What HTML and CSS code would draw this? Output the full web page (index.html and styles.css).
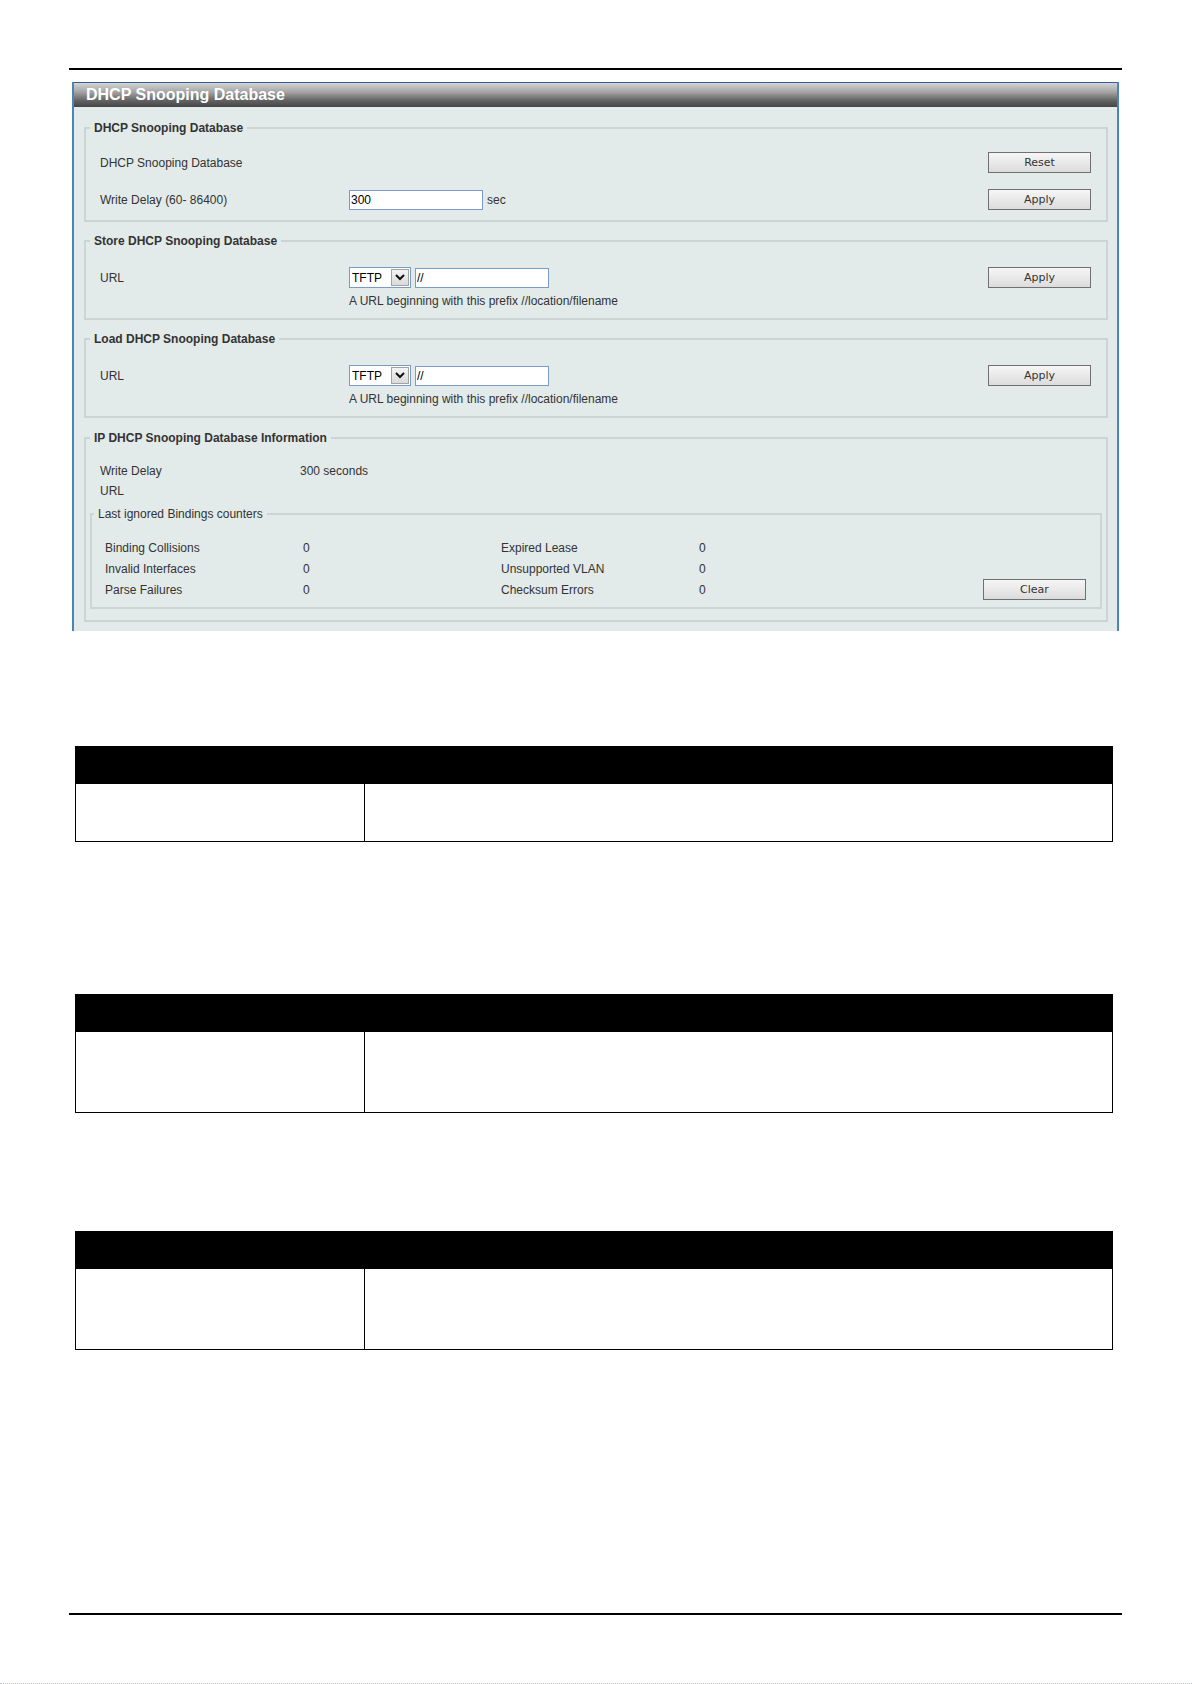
FILE: index.html
```html
<!DOCTYPE html>
<html lang="en">
<head>
    <meta charset="UTF-8">
    <title>DHCP Snooping Database</title>
    <link rel="stylesheet" href="styles.css">
</head>
<body>
    <div class="page">
        <hr class="rule">

        <div class="panel">
            <div class="panel-title">DHCP Snooping Database</div>
            <div class="panel-body">

                <fieldset class="group group-first">
                    <legend>DHCP Snooping Database</legend>
                    <div class="form-row">
                        <span>DHCP Snooping Database</span>
                        <span></span>
                        <button class="btn">Reset</button>
                    </div>
                    <div class="form-row">
                        <span>Write Delay (60- 86400)</span>
                        <span class="control"><input class="text-input" type="text" value="300"> sec</span>
                        <button class="btn">Apply</button>
                    </div>
                </fieldset>

                <fieldset class="group group-url">
                    <legend>Store DHCP Snooping Database</legend>
                    <div class="form-row">
                        <span>URL</span>
                        <span class="control">
                            <span class="proto-select">
                                <select class="proto"><option>TFTP</option></select>
                                <span class="proto-arrow">
                                    <svg width="10" height="7" viewBox="0 0 10 7"><polyline points="1,1 5,5 9,1" fill="none" stroke="#111" stroke-width="2"/></svg>
                                </span>
                            </span>
                            <input class="text-input url-input" type="text" value="//">
                        </span>
                        <button class="btn">Apply</button>
                    </div>
                    <div class="hint">A URL beginning with this prefix //location/filename</div>
                </fieldset>

                <fieldset class="group group-url">
                    <legend>Load DHCP Snooping Database</legend>
                    <div class="form-row">
                        <span>URL</span>
                        <span class="control">
                            <span class="proto-select">
                                <select class="proto"><option>TFTP</option></select>
                                <span class="proto-arrow">
                                    <svg width="10" height="7" viewBox="0 0 10 7"><polyline points="1,1 5,5 9,1" fill="none" stroke="#111" stroke-width="2"/></svg>
                                </span>
                            </span>
                            <input class="text-input url-input" type="text" value="//">
                        </span>
                        <button class="btn">Apply</button>
                    </div>
                    <div class="hint">A URL beginning with this prefix //location/filename</div>
                </fieldset>

                <fieldset class="group group-info">
                    <legend>IP DHCP Snooping Database Information</legend>
                    <div class="info-row"><span>Write Delay</span><span>300 seconds</span></div>
                    <div class="info-row"><span>URL</span><span></span></div>

                    <fieldset class="counters">
                        <legend>Last ignored Bindings counters</legend>
                        <div class="counter-row">
                            <span>Binding Collisions</span><span>0</span>
                            <span>Expired Lease</span><span>0</span>
                            <span></span><span></span>
                        </div>
                        <div class="counter-row">
                            <span>Invalid Interfaces</span><span>0</span>
                            <span>Unsupported VLAN</span><span>0</span>
                            <span></span><span></span>
                        </div>
                        <div class="counter-row">
                            <span>Parse Failures</span><span>0</span>
                            <span>Checksum Errors</span><span>0</span>
                            <span></span><button class="btn">Clear</button>
                        </div>
                    </fieldset>
                </fieldset>

            </div>
        </div>

        <table class="param-table table-first">
            <tr><th></th><th></th></tr>
            <tr><td class="cell-short"></td><td></td></tr>
        </table>

        <table class="param-table table-second">
            <tr><th></th><th></th></tr>
            <tr><td class="cell-tall"></td><td></td></tr>
        </table>

        <table class="param-table table-third">
            <tr><th></th><th></th></tr>
            <tr><td class="cell-tall"></td><td></td></tr>
        </table>

        <hr class="rule rule-bottom">
    </div>
    <div class="page-edge"></div>
</body>
</html>
```

FILE: styles.css
```css
body {
    margin: 0;
    background-color: #fff;
    font-family: "Liberation Sans", Arial, sans-serif;
    font-size: 12px;
    color: #333;
}
.page {
    width: 1053px;
    margin-left: 69px;
    padding-top: 68px;
}
.rule {
    height: 2px;
    margin: 0;
    border: 0;
    background-color: #000;
}

/* web UI panel */
.panel {
    width: 1047px;
    margin: 12px 0 0 3px;
    box-sizing: border-box;
    border-left: 2px solid #4a84bd;
    border-right: 2px solid #4a84bd;
    background-color: #e2eaea;
}
.panel-title {
    height: 24px;
    border-top: 1px solid #2d6096;
    padding-left: 12px;
    background: linear-gradient(#d4d4d4, #a8a8a8 35%, #606060 75%, #454545);
    color: #fff;
    font-size: 16px;
    font-weight: bold;
    line-height: 24px;
}
.panel-body {
    display: flex;
    flex-direction: column;
    gap: 12px;
    padding: 14px 9px 9px 10px;
}
.group {
    margin: 0;
    min-width: 0;
    padding: 17px 4px 9px;
    border: 2px solid #cbd5d5;
}
.group > legend {
    padding: 0 4px;
    font-weight: bold;
    line-height: 14px;
}
.group-first {
    padding-bottom: 10px;
}
.group-url {
    padding-top: 19px;
    padding-bottom: 10px;
}
.group-info {
    margin-top: 1px;
    padding-top: 16px;
    padding-bottom: 11px;
}

.form-row {
    display: grid;
    grid-template-columns: 249px 1fr 103px;
    align-items: center;
    height: 21px;
    padding: 0 11px 0 10px;
}
.form-row + .form-row {
    margin-top: 16px;
}
.control {
    display: flex;
    align-items: center;
    gap: 4px;
}
.hint {
    margin: 6px 0 0 259px;
    line-height: 14px;
}

.btn {
    width: 103px;
    height: 21px;
    padding: 0;
    border: 1px solid #707070;
    background: linear-gradient(#f6f6f6, #dcdcdc);
    font-family: "DejaVu Sans", Verdana, sans-serif;
    font-size: 11px;
    color: #333;
}
.text-input {
    box-sizing: border-box;
    width: 134px;
    height: 20px;
    padding: 0 1px;
    border: 1px solid #7a9cc4;
    background-color: #fff;
    font: 12px "Liberation Sans", Arial, sans-serif;
    color: #000;
}
.proto-select {
    display: inline-flex;
    box-sizing: border-box;
    width: 62px;
    height: 21px;
    border: 1px solid #7a9cc4;
    background-color: #fff;
}
.proto {
    appearance: none;
    width: 40px;
    padding: 0 0 0 2px;
    border: 0;
    background: transparent;
    font: 12px "Liberation Sans", Arial, sans-serif;
    color: #000;
}
.proto-arrow {
    display: flex;
    align-items: center;
    justify-content: center;
    width: 16px;
    margin: 1px;
    border: 1px solid #a3a3a3;
    background: linear-gradient(#f4f4f4, #dadada);
}

.info-row {
    display: grid;
    grid-template-columns: 200px 1fr;
    align-items: center;
    height: 20px;
    padding-left: 10px;
}
.counters {
    margin: 6px 0 0;
    min-width: 0;
    padding: 16px 2px 7px;
    border: 2px solid #cbd5d5;
}
.counters > legend {
    padding: 0 4px;
    font-weight: normal;
    line-height: 14px;
}
.counter-row {
    display: grid;
    grid-template-columns: 198px 198px 198px 198px 1fr 103px;
    align-items: center;
    height: 21px;
    padding: 0 12px 0 11px;
}

/* parameter tables */
.param-table {
    width: 1038px;
    margin-left: 6px;
    border-collapse: collapse;
}
.param-table th,
.param-table td {
    padding: 0;
    border: 1px solid #000;
}
.param-table th {
    height: 36px;
    background-color: #000;
}
.param-table th:first-child {
    width: 288px;
}
.table-first {
    margin-top: 115px;
}
.table-second {
    margin-top: 152px;
}
.table-third {
    margin-top: 118px;
}
.cell-short {
    height: 57px;
}
.cell-tall {
    height: 80px;
}
.rule-bottom {
    margin-top: 263px;
}
.page-edge {
    margin-top: 68px;
    border-top: 1px dotted #b8c0c8;
}
```
